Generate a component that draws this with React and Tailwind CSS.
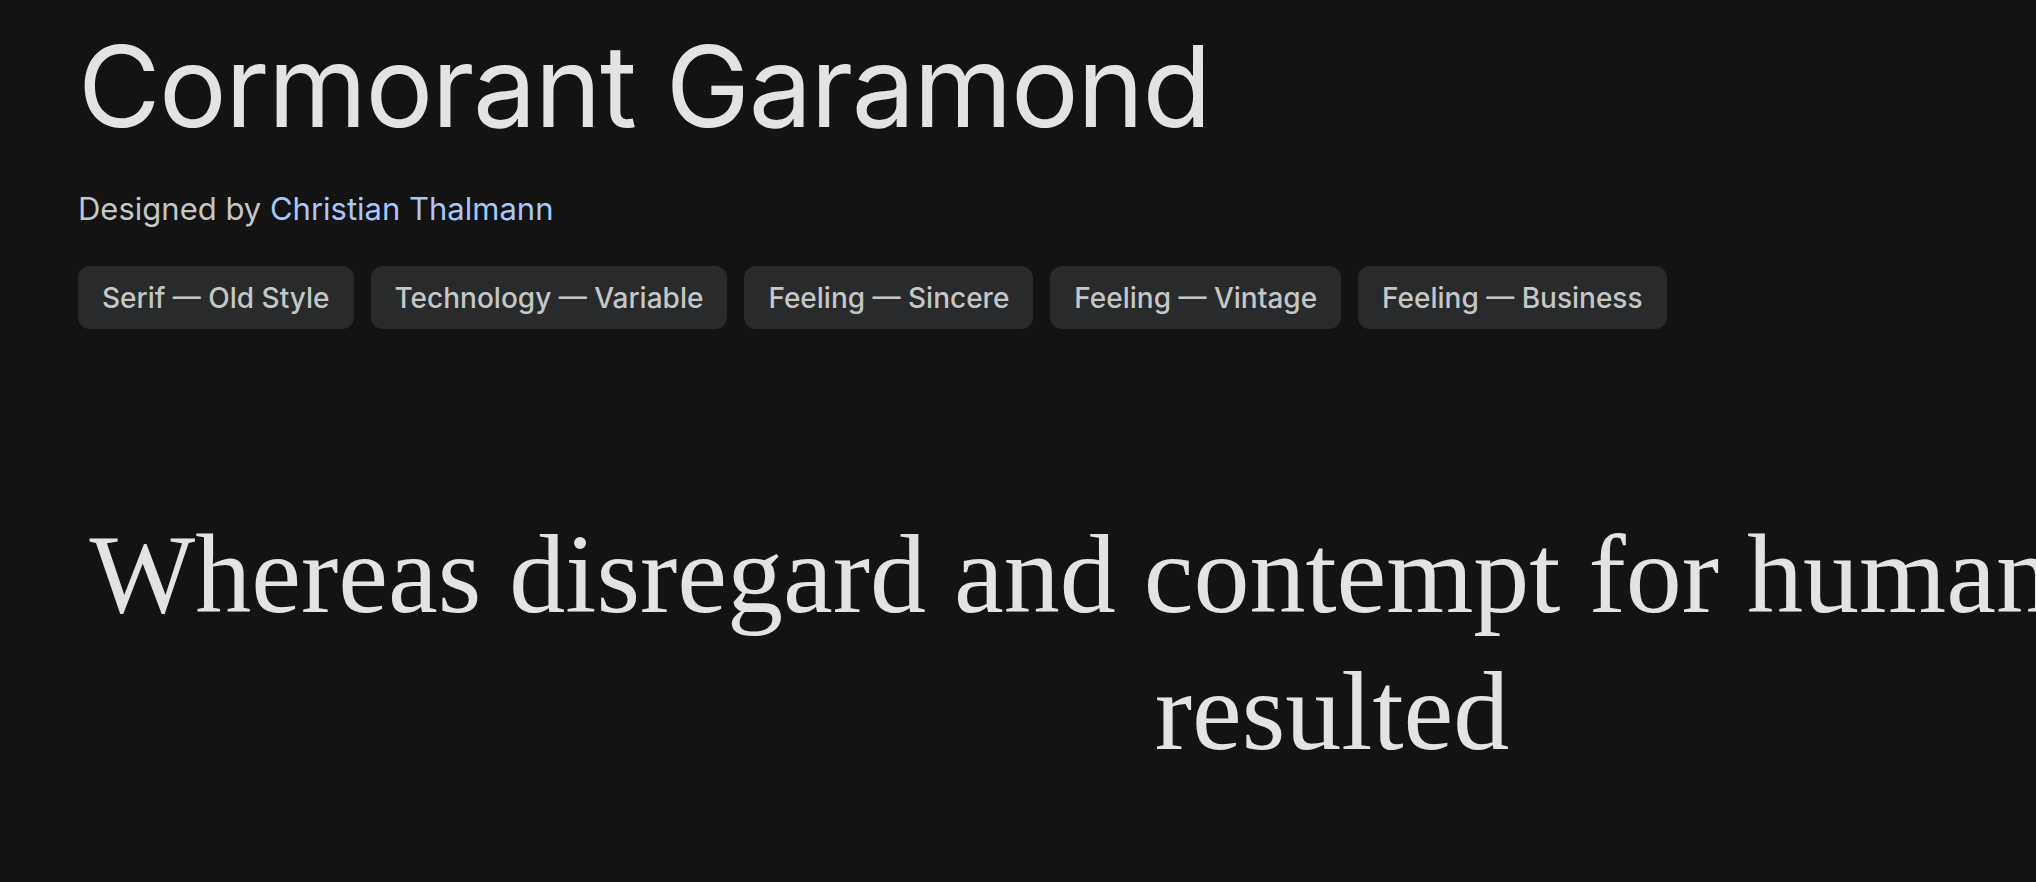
const chips = [
  'Serif — Old Style',
  'Technology — Variable',
  'Feeling — Sincere',
  'Feeling — Vintage',
  'Feeling — Business',
];

export default function App() {
  return (
    <div className="h-[882px] w-full overflow-hidden bg-[#131313] font-['Inter',sans-serif]">
      <div className="pl-[78px] pt-[30px]">
        <h1 className="text-[113px] font-normal leading-none tracking-[-1.5px] text-[#e3e3e3]">Cormorant Garamond</h1>
        <p className="mt-[50px] text-[31px] leading-none text-[#c4c7c5]">
          Designed by <a className="text-[#a8c7fa]">Christian Thalmann</a>
        </p>
        <div className="mt-[42px] flex gap-[17px]">
          {chips.map((c) => (
            <span
              key={c}
              className="flex h-[63px] items-center rounded-[12px] bg-[#282a2c] px-[24px] text-[28px] font-medium text-[#c4c7c5]"
            >
              {c}
            </span>
          ))}
        </div>
      </div>
      <div className="mt-[177px] ml-[32px] w-[2600px] text-center font-['Liberation_Serif',serif] text-[112px] leading-[137px] text-[#e3e3e3]">
        Whereas disregard and contempt for human rights have resulted
      </div>
    </div>
  );
}
